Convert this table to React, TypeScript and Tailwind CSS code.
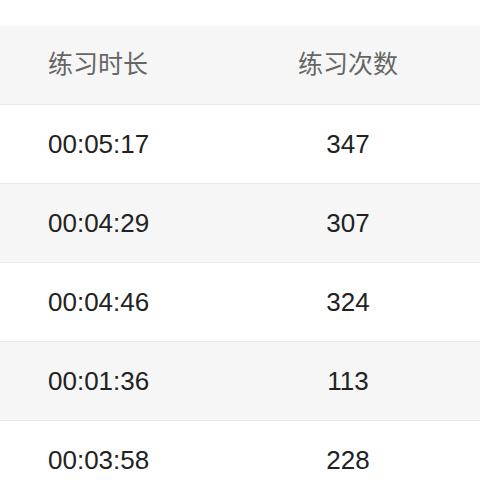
import React from "react";

const rows = [
  ["00:05:17", "347"],
  ["00:04:29", "307"],
  ["00:04:46", "324"],
  ["00:01:36", "113"],
  ["00:03:58", "228"],
];

export default function App() {
  return (
    <div
      className="w-[480px] h-[480px] overflow-hidden bg-white pt-[26px]"
      style={{ fontFamily: '"Liberation Sans", "Noto Sans CJK SC", sans-serif' }}
    >
      <div className="flex h-[79px] items-center bg-[#f6f6f6] border-b border-[#e9e9e9] text-[25px] text-[#666666]">
        <div className="w-[216px] pl-12">练习时长</div>
        <div className="flex-1 text-center">练习次数</div>
      </div>
      {rows.map((r, i) => (
        <div
          key={i}
          className={`flex h-[79px] items-center border-b border-[#e9e9e9] text-[26px] text-[#222222] ${
            i % 2 === 1 ? "bg-[#f6f6f6]" : "bg-white"
          }`}
        >
          <div className="w-[216px] pl-12">{r[0]}</div>
          <div className="flex-1 text-center">{r[1]}</div>
        </div>
      ))}
    </div>
  );
}
